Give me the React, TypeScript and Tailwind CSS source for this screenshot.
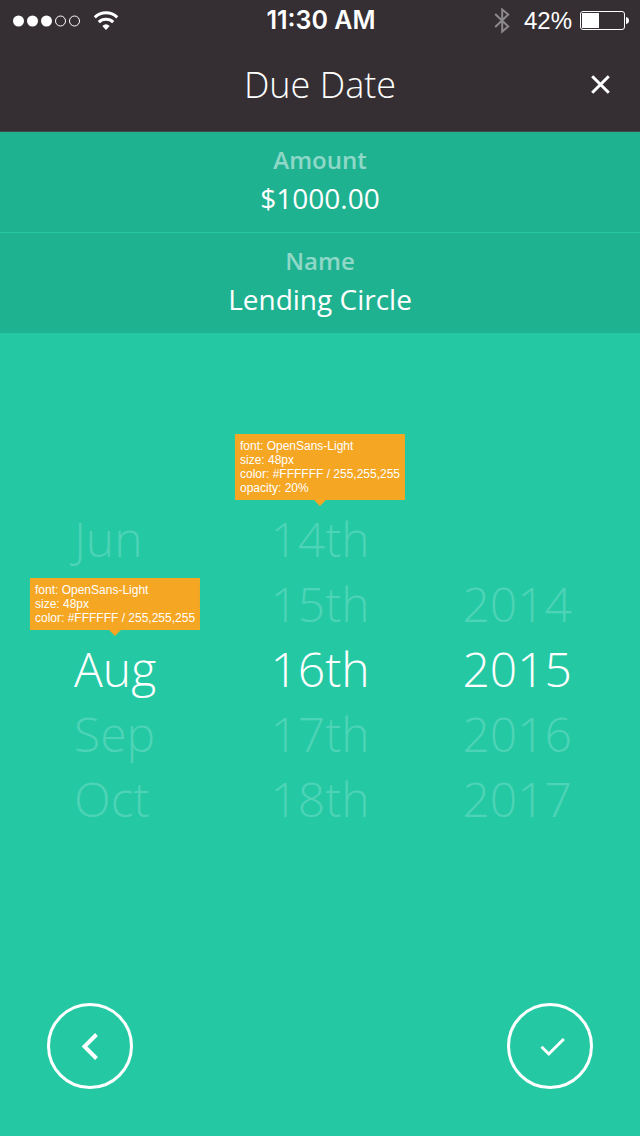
import React from "react";

function Signal() {
  return (
    <svg width="68" height="12" viewBox="0 0 68 12" aria-hidden="true">
      {[5.5, 19.5, 33.5].map((x) => (
        <circle key={x} cx={x} cy="6" r="5.5" fill="white" />
      ))}
      {[47.5, 61.5].map((x) => (
        <circle key={x} cx={x} cy="6" r="5" fill="none" stroke="white" />
      ))}
    </svg>
  );
}

function Wifi() {
  return (
    <svg width="26" height="20" viewBox="0 0 26 20" aria-hidden="true">
      <g fill="none" stroke="white" strokeWidth="3">
        <path d="M1.8 6.4 A16 16 0 0 1 24.2 6.4" />
        <path d="M5.8 11.2 A10.4 10.4 0 0 1 20.2 11.2" />
      </g>
      <path d="M13 19 L9.3 14.9 A5.6 5.6 0 0 1 16.7 14.9 Z" fill="white" />
    </svg>
  );
}

function StatusBar() {
  return (
    <div className="grid h-[41px] grid-cols-3 items-center pr-[11px] pl-[13px] font-['Liberation_Sans',sans-serif] text-2xl">
      <div className="flex items-center gap-3">
        <Signal />
        <Wifi />
      </div>
      <div className="text-center font-['Inter',sans-serif] text-[25px] font-semibold">11:30 AM</div>
      <div className="flex items-center justify-end gap-2">
        <svg className="mr-1.5" width="16" height="26" viewBox="0 0 16 26" fill="none" stroke="#8c898b" strokeWidth="2" aria-hidden="true">
          <path d="M1.2 6 L14.2 18.5 L8.2 23.5 V1.5 L14.2 6.5 L1.2 19" />
        </svg>
        <span>42%</span>
        <svg width="49" height="20" viewBox="0 0 49 20" aria-hidden="true">
          <rect x="0.5" y="0.5" width="44" height="18" rx="2.5" fill="none" stroke="white" />
          <rect x="2" y="2" width="17" height="15" fill="white" />
          <path d="M46 6 Q49 6.5 49 9.5 Q49 12.5 46 13Z" fill="white" />
        </svg>
      </div>
    </div>
  );
}

function Detail({ label, value }: { label: string; value: string }) {
  return (
    <div className="flex flex-col items-center bg-[#1fb291] pt-3 pb-[14px]">
      <dt className="text-2xl leading-8 font-semibold text-white/50">{label}</dt>
      <dd className="mt-0.5 text-[28px] leading-10">{value}</dd>
    </div>
  );
}

function Note({ lines }: { lines: string[] }) {
  return (
    <div className="absolute bottom-full left-1/2 mb-1.5 w-max -translate-x-1/2 bg-[#f5a623] p-[5px] font-['Liberation_Sans',sans-serif] text-xs leading-[14px] text-white">
      {lines.map((l) => (
        <p key={l}>{l}</p>
      ))}
      <svg className="absolute top-full left-1/2 -translate-x-1/2" width="12" height="6" viewBox="0 0 12 6" aria-hidden="true">
        <path d="M0 0H12L6 6Z" fill="#f5a623" />
      </svg>
    </div>
  );
}

type Item = { text: string; note?: string[] };

function Column({ label, items, selected }: { label: string; items: Item[]; selected: string }) {
  return (
    <ul aria-label={label} className="flex flex-col">
      {items.map((item, i) => (
        <li key={i} className="relative h-[65px]">
          {item.text && (
            <button
              type="button"
              className={
                item.text === selected
                  ? "block text-5xl leading-[65px] font-light text-white"
                  : "block text-5xl leading-[65px] font-light text-white/20"
              }
            >
              {item.text}
            </button>
          )}
          {item.note && <Note lines={item.note} />}
        </li>
      ))}
    </ul>
  );
}

const font = ["font: OpenSans-Light", "size: 48px", "color: #FFFFFF / 255,255,255"];

export default function App() {
  return (
    <div className="flex min-h-screen flex-col bg-[#24c9a4] font-['Open_Sans',sans-serif] text-white">
      <header className="border-b border-[#3c4a48] bg-[#352f33] pb-0.5">
        <StatusBar />
        <div className="grid h-[88px] grid-cols-[1fr_auto_1fr] items-center px-7">
          <h1 className="col-start-2 text-4xl font-light">Due Date</h1>
          <button type="button" aria-label="Close" className="justify-self-end">
            <svg width="24" height="24" viewBox="0 0 24 24" fill="none" stroke="white" strokeWidth="3" aria-hidden="true">
              <path d="M4.2 3.2L20.8 19.8M20.8 3.2L4.2 19.8" />
            </svg>
          </button>
        </div>
      </header>
      <dl className="flex flex-col gap-px">
        <Detail label="Amount" value="$1000.00" />
        <Detail label="Name" value="Lending Circle" />
      </dl>
      <main className="flex grow flex-col justify-between px-[47px] pt-[173px] pb-[47px]">
        <div className="grid grid-cols-[1fr_auto_1fr]">
          <div className="justify-self-start pl-[27px]">
            <Column
              label="Month"
              selected="Aug"
              items={[{ text: "Jun" }, { text: "" }, { text: "Aug", note: font }, { text: "Sep" }, { text: "Oct" }]}
            />
          </div>
          <Column
            label="Day"
            selected="16th"
            items={[
              { text: "14th", note: [...font, "opacity: 20%"] },
              { text: "15th" },
              { text: "16th" },
              { text: "17th" },
              { text: "18th" },
            ]}
          />
          <div className="justify-self-end pr-[21px]">
            <Column
              label="Year"
              selected="2015"
              items={[{ text: "" }, { text: "2014" }, { text: "2015" }, { text: "2016" }, { text: "2017" }]}
            />
          </div>
        </div>
        <nav className="flex justify-between">
          <button type="button" aria-label="Back" className="grid size-[86px] place-items-center rounded-full border-3 border-white">
            <svg width="24" height="32" viewBox="0 0 24 32" fill="none" stroke="white" strokeWidth="4" aria-hidden="true">
              <path d="M18.5 4.5L6.5 16.5L18.5 28.5" />
            </svg>
          </button>
          <button type="button" aria-label="Confirm" className="grid size-[86px] place-items-center rounded-full border-3 border-white">
            <svg width="32" height="24" viewBox="0 0 32 24" fill="none" stroke="white" strokeWidth="3" aria-hidden="true">
              <path d="M7.5 12.8L14.8 20L29.8 5" />
            </svg>
          </button>
        </nav>
      </main>
    </div>
  );
}
